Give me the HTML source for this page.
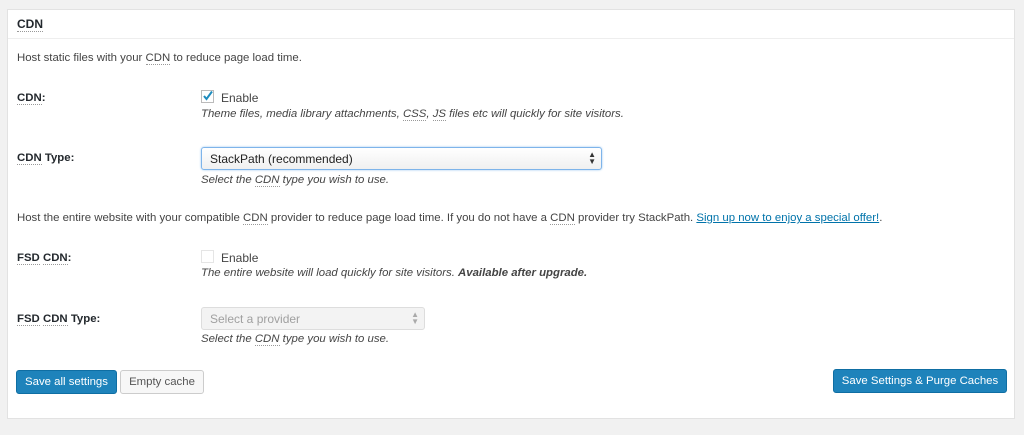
<!DOCTYPE html>
<html><head><style>
body{margin:0;width:1024px;height:435px;background:#f1f1f1;font-family:"Liberation Sans",sans-serif;font-size:11.4px;color:#444;position:relative;overflow:hidden}
.p{position:absolute;left:7px;top:9px;width:1008px;height:410px;background:#fff;border:1px solid #e2e2e2;box-sizing:border-box}
.a{position:absolute;white-space:nowrap}
abbr{text-decoration:none;border-bottom:1px dotted #999}
b{color:#23282d}
i{color:#444}
.btn{position:absolute;box-sizing:border-box;border-radius:3px;font-size:11.4px;text-align:center;line-height:22px;height:24px}
.pri{background:#1e83bb;border:1px solid #0f6ea3;color:#fff}
.sec{background:#f7f7f7;border:1px solid #ccc;color:#555}
</style></head><body>
<div class="p"></div>
<div class="a" style="left:8px;top:38px;width:1006px;border-top:1px solid #eee"></div>
<div class="a" style="left:17px;top:17px;font-size:12px;font-weight:bold;color:#23282d"><abbr>CDN</abbr></div>
<div class="a" style="left:17px;top:52px">Host static files with your <abbr>CDN</abbr> to reduce page load time.</div>
<div class="a" style="left:17px;top:92px;font-weight:bold;color:#23282d"><abbr>CDN</abbr>:</div>
<div class="a" style="left:201px;top:90px;width:13px;height:13px;border:1px solid #bbb;box-sizing:border-box"><svg width="13" height="13" style="position:absolute;left:-1px;top:-2px"><path d="M3 7 L5.5 10 L11 2.5" stroke="#1e8cbe" stroke-width="2" fill="none"/></svg></div>
<div class="a" style="left:221px;top:91px;font-size:12px">Enable</div>
<div class="a" style="left:201px;top:108px"><i>Theme files, media library attachments, <abbr>CSS</abbr>, <abbr>JS</abbr> files etc will quickly for site visitors.</i></div>
<div class="a" style="left:17px;top:152px;font-weight:bold;color:#23282d"><abbr>CDN</abbr> Type:</div>
<div class="a" style="left:201px;top:147px;width:401px;height:23px;border:1px solid #7eb4ea;border-radius:3px;box-sizing:border-box;background:linear-gradient(#fff,#f0f0f0);box-shadow:0 0 2px #9cc8f0"><span style="position:absolute;left:8px;top:4px;font-size:12px;color:#222">StackPath (recommended)</span><span style="position:absolute;right:5px;top:3px;font-size:8px;line-height:7px;color:#333">▲<br>▼</span></div>
<div class="a" style="left:201px;top:174px"><i>Select the <abbr>CDN</abbr> type you wish to use.</i></div>
<div class="a" style="left:17px;top:212px">Host the entire website with your compatible <abbr>CDN</abbr> provider to reduce page load time. If you do not have a <abbr>CDN</abbr> provider try StackPath. <span style="color:#0073aa;text-decoration:underline">Sign up now to enjoy a special offer!</span>.</div>
<div class="a" style="left:17px;top:252px;font-weight:bold;color:#23282d"><abbr>FSD</abbr> <abbr>CDN</abbr>:</div>
<div class="a" style="left:201px;top:250px;width:13px;height:13px;border:1px solid #e5e5e5;box-sizing:border-box"></div>
<div class="a" style="left:221px;top:251px;font-size:12px">Enable</div>
<div class="a" style="left:201px;top:267px"><i>The entire website will load quickly for site visitors. <b style="color:#444">Available after upgrade.</b></i></div>
<div class="a" style="left:17px;top:313px;font-weight:bold;color:#23282d"><abbr>FSD</abbr> <abbr>CDN</abbr> Type:</div>
<div class="a" style="left:201px;top:307px;width:224px;height:23px;border:1px solid #ddd;border-radius:3px;box-sizing:border-box;background:#f3f3f3"><span style="position:absolute;left:8px;top:4px;font-size:12px;color:#a0a0a0">Select a provider</span><span style="position:absolute;right:5px;top:3px;font-size:8px;line-height:7px;color:#aaa">▲<br>▼</span></div>
<div class="a" style="left:201px;top:333px"><i>Select the <abbr>CDN</abbr> type you wish to use.</i></div>
<div class="btn pri" style="left:16px;top:370px;width:101px">Save all settings</div>
<div class="btn sec" style="left:120px;top:370px;width:84px">Empty cache</div>
<div class="btn pri" style="left:833px;top:369px;width:174px">Save Settings &amp; Purge Caches</div>
</body></html>
